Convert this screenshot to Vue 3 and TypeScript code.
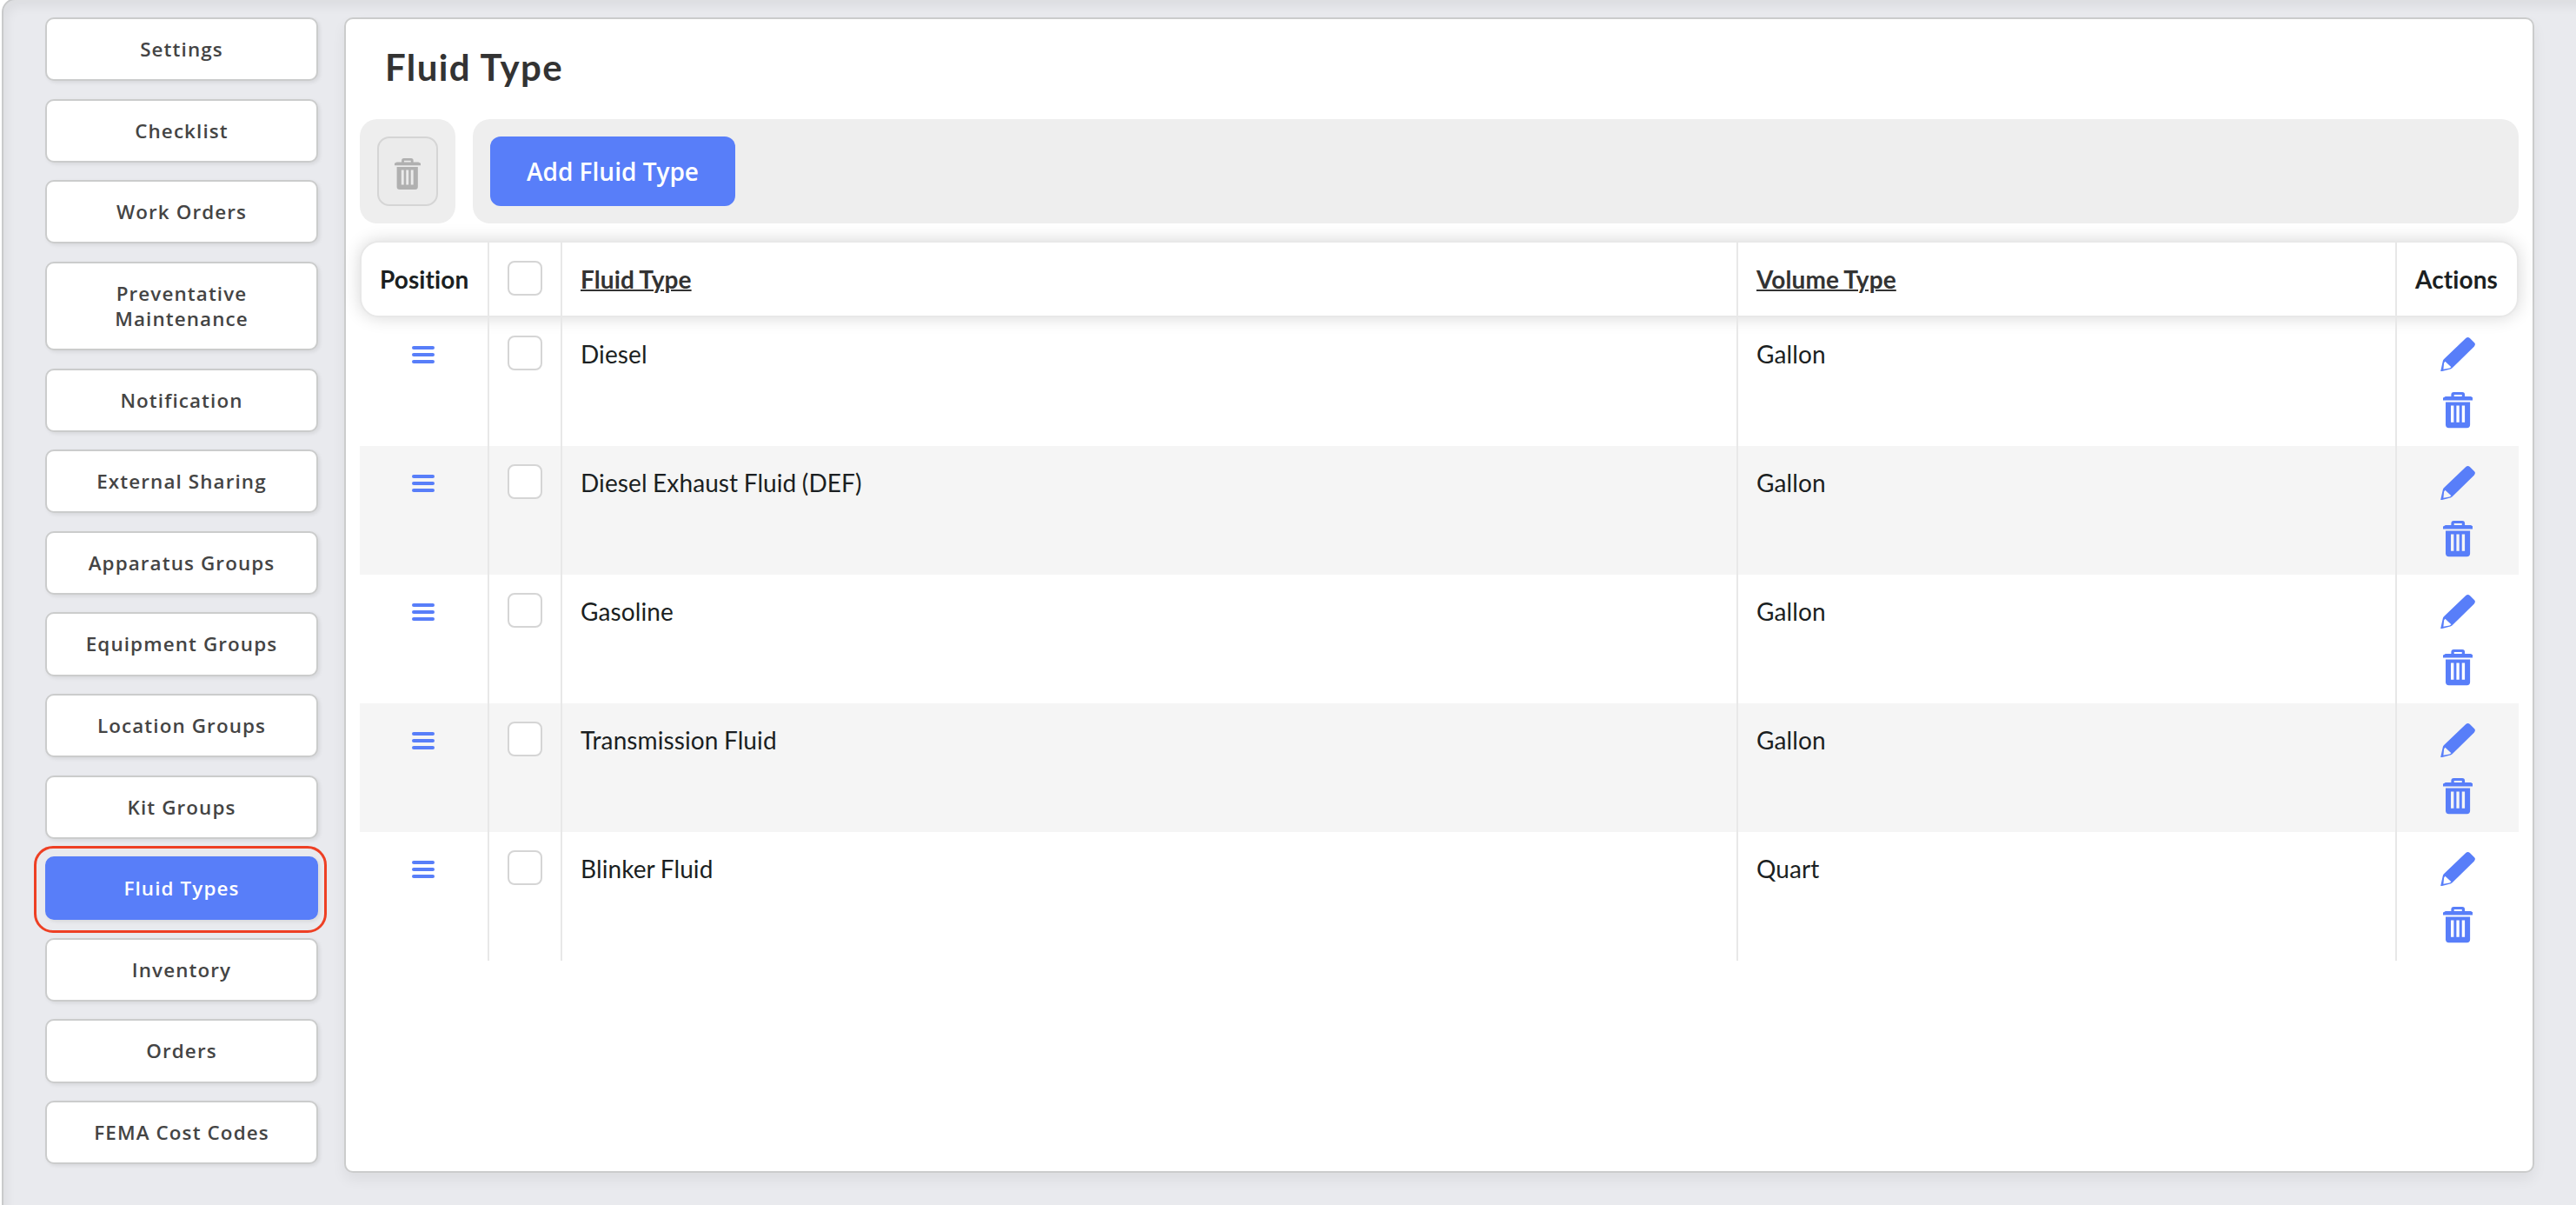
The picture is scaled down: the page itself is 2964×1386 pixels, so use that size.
<script setup lang="ts">
interface NavItem {
  label: string
  active?: boolean
}

interface FluidType {
  name: string
  volume: string
}

const navItems: NavItem[] = [
  { label: 'Settings' },
  { label: 'Checklist' },
  { label: 'Work Orders' },
  { label: 'Preventative Maintenance' },
  { label: 'Notification' },
  { label: 'External Sharing' },
  { label: 'Apparatus Groups' },
  { label: 'Equipment Groups' },
  { label: 'Location Groups' },
  { label: 'Kit Groups' },
  { label: 'Fluid Types', active: true },
  { label: 'Inventory' },
  { label: 'Orders' },
  { label: 'FEMA Cost Codes' },
]

const fluidTypes: FluidType[] = [
  { name: 'Diesel', volume: 'Gallon' },
  { name: 'Diesel Exhaust Fluid (DEF)', volume: 'Gallon' },
  { name: 'Gasoline', volume: 'Gallon' },
  { name: 'Transmission Fluid', volume: 'Gallon' },
  { name: 'Blinker Fluid', volume: 'Quart' },
]

const trashPath =
  'M0 28V21Q0 18 4 18Q6 15 10 15H28V9Q28 0 37 0H66Q75 0 75 9V15H94Q98 15 100 18Q104 18 104 21V28Z' +
  'M38 9V15H65V9Z' +
  'M9 34H93V112Q93 123 82 123H20Q9 123 9 112Z' +
  'M27 46V104H37V46ZM46 46V104H56V46ZM65 46V104H75V46Z'

const pencilPath =
  'M0 118L8 82Q9 78 12 75L87 3Q94 -3 101 3L116 18Q122 24 116 31L42 104Q39 108 34 109Z' +
  'M16 83L12 88L10 110L31 106L37 102Z'
</script>

<template>
  <div class="shell">
    <nav class="sidebar">
      <button
        v-for="item in navItems"
        :key="item.label"
        type="button"
        class="nav-item"
        :class="{ active: item.active }"
      >
        <span class="nav-label">{{ item.label }}</span>
      </button>
    </nav>

    <main class="panel">
      <h1 class="title">Fluid Type</h1>

      <div class="toolbar">
        <div class="tool-group">
          <button type="button" class="bulk-delete" disabled aria-label="Delete selected">
            <svg viewBox="0 0 104 123" width="30" height="36" preserveAspectRatio="none">
              <path :d="trashPath" fill="currentColor" fill-rule="evenodd" />
            </svg>
          </button>
        </div>
        <div class="tool-group wide">
          <button type="button" class="add-button">Add Fluid Type</button>
        </div>
      </div>

      <div class="table">
        <div class="row head">
          <div class="cell">Position</div>
          <div class="cell check"><span class="checkbox"></span></div>
          <div class="cell"><a class="sort">Fluid Type</a></div>
          <div class="cell"><a class="sort">Volume Type</a></div>
          <div class="cell">Actions</div>
        </div>
        <div v-for="fluid in fluidTypes" :key="fluid.name" class="row">
          <div class="cell drag">
            <span class="bars"><i></i><i></i><i></i></span>
          </div>
          <div class="cell check"><span class="checkbox"></span></div>
          <div class="cell">{{ fluid.name }}</div>
          <div class="cell">{{ fluid.volume }}</div>
          <div class="cell actions">
            <svg class="pencil" viewBox="0 0 119 118" width="40" height="39.5">
              <path :d="pencilPath" fill="currentColor" fill-rule="evenodd" />
            </svg>
            <svg class="trash" viewBox="0 0 104 123" width="34.8" height="41.2">
              <path :d="trashPath" fill="currentColor" fill-rule="evenodd" />
            </svg>
          </div>
        </div>
      </div>
    </main>
  </div>
</template>

<style>
body {
  margin: 0;
  background: #fff;
  overflow: hidden;
}
#app {
  overflow: hidden;
  height: 1386px;
}
</style>

<style scoped>
* {
  box-sizing: border-box;
}
.shell {
  display: flex;
  align-items: flex-start;
  gap: 30px;
  width: 3000px;
  height: 1420px;
  margin: -2px 0 0 2px;
  padding: 20px 0 0 48px;
  border: 2px solid #c9cacb;
  border-radius: 16px;
  background: #e9eaee;
  box-shadow: inset 4px 8px 12px rgba(0, 0, 0, 0.055);
}
.sidebar {
  display: flex;
  flex-direction: column;
  gap: 20.4px;
  width: 314px;
}
button {
  font: inherit;
  margin: 0;
}
.nav-item {
  position: relative;
  display: flex;
  align-items: center;
  justify-content: center;
  padding: 20px 60px;
  border: 2px solid #cbcccc;
  border-radius: 10px;
  background: #fff;
  box-shadow: 2px 2px 4px rgba(0, 0, 0, 0.08);
  color: #444;
  font: 600 22.4px/29.2px 'Open Sans', sans-serif;
  letter-spacing: 1.12px;
  text-align: center;
}
.nav-label {
  margin: 0 -40px;
}
.nav-item:nth-child(4) .nav-label {
  margin: 0;
}
.nav-item.active {
  border-color: #587ef9;
  background: #587ef9;
  color: #fff;
}
.nav-item.active::after {
  content: '';
  position: absolute;
  inset: -14px -12px -17px -15px;
  border: 3px solid #ee4024;
  border-radius: 22px;
}
.panel {
  width: 2520px;
  height: 1329px;
  padding: 0 16px;
  border: 2px solid #cbcccc;
  border-radius: 10px;
  background: #fff;
  box-shadow: 0 8px 16px rgba(0, 0, 0, 0.06);
}
.title {
  height: 115px;
  margin: 0;
  padding: 25px 0 0 29px;
  color: #333;
  font: 700 42px/60px Lato, sans-serif;
  letter-spacing: 1.4px;
}
.toolbar {
  display: flex;
  gap: 20px;
}
.tool-group {
  height: 120px;
  padding: 20px;
  border-radius: 20px;
  background: #eee;
}
.wide {
  flex: 1;
}
.bulk-delete {
  display: flex;
  align-items: center;
  justify-content: center;
  width: 70px;
  height: 80px;
  padding: 6px 0 0;
  border: 2px solid #d5d5d5;
  border-radius: 14px;
  background: #ebebeb;
  color: #b0b0b0;
}
.add-button {
  width: 282px;
  height: 80px;
  padding: 0;
  border: 0;
  border-radius: 12px;
  background: #587ef9;
  color: #fff;
  font: 600 28px/40px 'Open Sans', sans-serif;
}
.table {
  margin-top: 20px;
  color: #1b1f22;
  font: 400 28px/42px Lato, sans-serif;
  font-variant-ligatures: none;
  letter-spacing: 0.1px;
  word-spacing: -0.8px;
}
.row {
  display: grid;
  grid-template-columns: 149px 84px 1353px 758px 140px;
  height: 148px;
}
.row:nth-child(odd):not(.head) {
  background: #f5f5f5;
}
.cell {
  padding: 21px 0 0 21px;
  border-right: 2px solid #e8e8e8;
}
.cell:last-child {
  border-right: 0;
}
.head {
  grid-template-columns: 147px 84px 1353px 758px 138px;
  height: 88px;
  border: 2px solid #e8e8e8;
  border-radius: 22px;
  background: #fff;
  box-shadow: 0 0 20px rgba(0, 0, 0, 0.16);
  font-weight: 700;
}
.sort {
  color: #333;
  text-decoration: underline;
  text-decoration-thickness: 2px;
}
.checkbox {
  display: block;
  width: 40px;
  height: 40px;
  border: 2px solid #d5d5d5;
  border-radius: 8px;
  background: #fff;
}
.drag {
  display: flex;
  justify-content: center;
  padding: 33px 1px 0 0;
}
.bars {
  display: flex;
  flex-direction: column;
  gap: 4px;
  width: 26px;
}
.bars i {
  height: 4px;
  border-radius: 2px;
  background: #587ef9;
}
.actions {
  display: flex;
  flex-direction: column;
  align-items: center;
  padding: 22.7px 0 0;
  color: #587ef9;
}
.trash {
  margin-top: 24.2px;
}
svg {
  display: block;
}
</style>
